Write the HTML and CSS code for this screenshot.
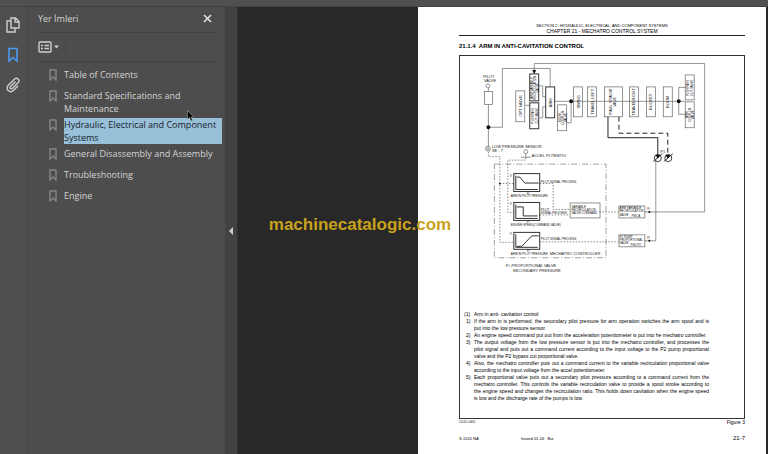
FILE: index.html
```html
<!DOCTYPE html>
<html lang="tr">
<head>
  <meta charset="UTF-8">
  <meta name="viewport" content="width=device-width, initial-scale=1.0">
  <title>Yer İmleri</title>
  <link rel="stylesheet" href="styles.css">
</head>
<body>
  <div class="toolbar"></div>
  <div class="app">
    <nav class="rail">
      <button aria-label="Sayfalar">
        <svg width="14" height="16" viewBox="0 0 14 16"><path d="M5 1h4.500L13 4.500V11H5zM9 1v4h4M5 4H1v11h8v-4" /></svg>
      </button>
      <button class="active" aria-label="Yer İmleri">
        <svg width="14" height="16" viewBox="0 0 14 16"><path d="M3 1.500h8v12.500L7 10.500 3 14z" /></svg>
      </button>
      <button aria-label="Ekler">
        <svg width="14" height="16" viewBox="0 0 14 16"><path d="M9.500 4.500L4.600 9.400c-1.300 1.600.4 3.200 1.900 1.900L12 5.800c2.600-2.900-1-6-3.700-3.500L2.500 8c-4 4.200 1.400 9 5.200 5.200l4.300-4.400" /></svg>
      </button>
    </nav>
    <aside class="panel">
      <div class="panel-header">
        <h2>Yer İmleri</h2>
        <button aria-label="Kapat">
          <svg width="9" height="9" viewBox="0 0 9 9"><path d="M1 1l7 7M8 1L1 8" /></svg>
        </button>
      </div>
      <div class="panel-tools">
        <button aria-label="Seçenekler">
          <svg width="21" height="12" viewBox="0 0 21 12">
            <rect x="1" y="1" width="12" height="10" rx="1" />
            <path d="M3 4.500h2M6.500 4.500H11M3 7.500h2M6.500 7.500H11" />
            <path class="caret" d="M16 4.500h5L18.500 7.500z" />
          </svg>
        </button>
      </div>
      <ul class="bookmarks">
        <li><svg class="mark" viewBox="0 0 8 12"><path d="M1 1h6v10L4 8l-3 3z" /></svg><a href="#">Table of Contents</a></li>
        <li><svg class="mark" viewBox="0 0 8 12"><path d="M1 1h6v10L4 8l-3 3z" /></svg><a href="#">Standard Specifications and Maintenance</a></li>
        <li><svg class="mark" viewBox="0 0 8 12"><path d="M1 1h6v10L4 8l-3 3z" /></svg><a href="#" class="selected">Hydraulic, Electrical and Component Systems</a></li>
        <li><svg class="mark" viewBox="0 0 8 12"><path d="M1 1h6v10L4 8l-3 3z" /></svg><a href="#">General Disassembly and Assembly</a></li>
        <li><svg class="mark" viewBox="0 0 8 12"><path d="M1 1h6v10L4 8l-3 3z" /></svg><a href="#">Troubleshooting</a></li>
        <li><svg class="mark" viewBox="0 0 8 12"><path d="M1 1h6v10L4 8l-3 3z" /></svg><a href="#">Engine</a></li>
      </ul>
    </aside>
    <button class="splitter" aria-label="Paneli gizle">
      <svg width="4" height="8" viewBox="0 0 4 8"><path d="M4 0v8L0 4z" /></svg>
    </button>
    <main class="viewer">
      <article class="page" lang="en">
        <header class="page-header">
          <p class="section">SECTION 2 -HYDRAULIC, ELECTRICAL, AND COMPONENT SYSTEMS</p>
          <p class="chapter">CHAPTER 21 - MECHATRO CONTROL SYSTEM</p>
        </header>
        <h1>21.1.4&nbsp; ARM IN ANTI-CAVITATION CONTROL</h1>
        <section class="figure">
          <svg class="diagram" viewBox="460 56 285 240">
            <!-- pilot line and main loop -->
            <g class="thin">
              <circle cx="488" cy="86" r="2" />
              <rect x="484.500" y="91.500" width="8" height="13" />
              <path d="M488.500 88v3M488.500 105v42M488.500 127.500h14v-59h48V87M534.500 74V63.500h171v149H645M656.500 161v80.500H645" />
              <circle cx="488" cy="149" r="2.500" /><circle cx="488" cy="149" r="1" />
              <circle cx="526" cy="152" r="2" /><path d="M526 154v4M521 157.500h10" />
              <path d="M525 105.500h5M555 101.500h131M571.500 102v21H567M686 87.500h-6.500v27h6.500M540 86h3v11h3M540 118h3v-11h3" />
            </g>
            <path class="fill" d="M532.500 70h4l-2 4zM486.500 127.500a2 2 0 1 0 4 0a2 2 0 1 0-4 0M569.500 101.500a2 2 0 1 0 4 0a2 2 0 1 0-4 0M677.500 101.500a2 2 0 1 0 4 0a2 2 0 1 0-4 0M649 212.500a1 1 0 1 0 2 0a1 1 0 1 0-2 0M649 241.500a1 1 0 1 0 2 0a1 1 0 1 0-2 0M499 184a1 1 0 1 0 2 0a1 1 0 1 0-2 0" />
            <!-- valve blocks -->
            <g class="block">
              <rect x="516" y="91" width="9" height="31" />
              <rect x="558" y="105" width="9" height="26" />
              <rect x="574" y="87" width="9" height="30" />
              <rect x="588" y="87" width="9" height="30" />
              <rect x="605" y="87" width="18" height="30" />
              <rect x="630" y="87" width="9" height="30" />
              <rect x="647" y="87" width="9" height="30" />
              <rect x="664" y="87" width="9" height="30" />
              <rect x="686" y="75" width="9" height="25" />
              <rect x="686" y="102" width="9" height="26" />
            </g>
            <g class="block strong">
              <rect x="530" y="74" width="9" height="27" />
              <rect x="530" y="103" width="9" height="26" />
              <rect x="546" y="87" width="9" height="31" />
            </g>
            <g class="label middle">
              <text transform="translate(522 106) rotate(-90)">OPT VALVE</text>
              <text transform="translate(552 103) rotate(-90)">ARM</text>
              <text transform="translate(580 102) rotate(-90)">SWING</text>
              <text transform="translate(594 102) rotate(-90)">TRAVEL LEFT</text>
              <text transform="translate(636 102) rotate(-90)">TRAVELRIGHT</text>
              <text transform="translate(653 102) rotate(-90)">BUCKET</text>
              <text transform="translate(670 102) rotate(-90)">BOOM</text>
            </g>
            <g class="small middle">
              <text transform="translate(533 88) rotate(-90)">ARM VARIABLE</text>
              <text transform="translate(536 88) rotate(-90)">RECIRCULATION</text>
              <text transform="translate(539 88) rotate(-90)">VALVE</text>
              <text transform="translate(534 116) rotate(-90)">P1 BYPASS</text>
              <text transform="translate(538 116) rotate(-90)">CUT VALVE</text>
              <text transform="translate(561 118) rotate(-90)">BOOM</text>
              <text transform="translate(564 118) rotate(-90)">CONFLUX</text>
              <text transform="translate(567 118) rotate(-90)">VALVE</text>
              <text transform="translate(613 102) rotate(-90)">TRAVEL STRAIGHT</text>
              <text transform="translate(617 102) rotate(-90)">VALVE</text>
              <text transform="translate(690 88) rotate(-90)">P2 BYPASS</text>
              <text transform="translate(694 88) rotate(-90)">CUT VALVE</text>
              <text transform="translate(689 115) rotate(-90)">ARM</text>
              <text transform="translate(692 115) rotate(-90)">CONFLUX</text>
              <text transform="translate(695 115) rotate(-90)">VALVE</text>
            </g>
            <!-- pumps -->
            <path class="line" d="M608.500 117v21h50v18" />
            <path class="line dashed" d="M619.500 117v16.500h49V156" />
            <g class="pump">
              <circle cx="658.500" cy="158.500" r="3.500" /><path d="M654 162l9-8" />
              <circle cx="669" cy="158.500" r="3.500" /><path d="M664.500 162l9-8" />
            </g>
            <path class="fill" d="M656 155h5l-2.500 4zM666 155h5l-2.500 4z" />
            <!-- mechatro controller -->
            <rect class="controller" x="494.500" y="164.500" width="112" height="94" />
            <path class="dotted" d="M488.500 152v5H500v86h14M500 184h14M526 158v2.500h-18V213h6M540 184h13.500v26H570M540 215.500h30M600 212.500h19M540 242.500h79" />
            <g class="block strong">
              <rect x="514" y="174" width="26" height="18" />
              <rect x="514" y="203" width="26" height="18" />
              <rect x="514" y="233" width="26" height="17" />
            </g>
            <g class="block">
              <rect x="570.500" y="203.500" width="30" height="15" />
              <rect x="619.500" y="206.500" width="26" height="12" />
              <rect x="619.500" y="235.500" width="26" height="12" />
            </g>
            <path class="curve" d="M516 176v14h22M517 177.500h3l5 6h14M516 205v14h22M517 207.500h6.500v9H538M516 235v13h22M517 247h5l10-10.500h7" />
            <g class="label">
              <text x="483" y="78">PILOT</text>
              <text x="484" y="82">VALVE</text>
              <text x="492" y="148">LOW PRESSURE SENSOR</text>
              <text x="492" y="152">SE - 7</text>
              <text x="532" y="157">ACCEL POTENTIO</text>
              <text x="550" y="256">MECHATRO CONTROLLER</text>
              <text x="506" y="268">Pi ;PROPORTIONAL VALVE</text>
              <text x="513" y="273">SECONDARY PRESSURE</text>
              <text x="661" y="153">P1</text>
            </g>
            <g class="small">
              <text x="541" y="183">PILOT SIGNAL PROCESS</text>
              <text x="541" y="212">PILOT</text>
              <text x="541" y="215">SIGNAL PROCESS</text>
              <text x="541" y="241">PILOT SIGNAL PROCESS</text>
              <text x="511" y="198">ARM IN PILOT PRESSURE</text>
              <text x="511" y="227">ENGINE SPEED(COMMAND VALVE)</text>
              <text x="511" y="256">ARM IN PILOT PRESSURE</text>
              <text x="527" y="195">Pi</text>
              <text x="527" y="224">Pi</text>
              <text x="527" y="253">Pi</text>
              <text x="510" y="177">V</text>
              <text x="510" y="206">V</text>
              <text x="510" y="236">V</text>
              <text x="572" y="209">VARIABLE</text>
              <text x="572" y="212">RECIRCULATION</text>
              <text x="572" y="215">VALVE COMMAND</text>
              <text x="620" y="210">ARM VARIABLE</text>
              <text x="620" y="213">RECIRCULATION</text>
              <text x="620" y="217">VALVE</text>
              <text x="632" y="218">PSV-A</text>
              <text x="620" y="239">P2 PUMP</text>
              <text x="620" y="242">PROPORTIONAL</text>
              <text x="620" y="245">VALVE</text>
              <text x="631" y="247">PSV-P2</text>
              <text x="648" y="211">Pi</text>
              <text x="648" y="240">Pi</text>
            </g>
          </svg>
          <div class="notes">
            <p class="lead"><span>(1)</span>Arm in anti- cavitation control</p>
            <ol>
              <li>If the arm in is performed, the secondary pilot pressure for arm operation switches the arm spool and is put into the low pressure sensor.</li>
              <li>An engine speed command put out from the acceleration potentiometer is put into he mechatro controller.</li>
              <li>The output voltage from the low pressure sensor is put into the mechatro controller, and processes the pilot signal and puts out a command current according to the input voltage to the P2 pump proportional valve and the P2 bypass cut proportional valve.</li>
              <li>Also, the mechatro controller puts out a command current to the variable recirculation proportional valve according to the input voltage from the accel potentiometer.</li>
              <li>Each proportional valve puts out a secondary pilot pressure according to a command current from the mechatro controller. This controls the variable recirculation valve to provide a spool stroke according to the engine speed and changes the recirculation ratio. This holds down cavitation when the engine speed is low and the discharge rate of the pumps is low.</li>
            </ol>
          </div>
        </section>
        <div class="caption"><span class="code">C0-D1-0401</span><span>Figure 3</span></div>
        <footer class="page-footer">
          <span>S-1520 NA</span>
          <span>Issued 01-06 &nbsp; Bur</span>
          <span class="number">21-7</span>
        </footer>
      </article>
    </main>
  </div>
  <div class="watermark">machinecatalogic.com</div>
  <svg class="cursor" width="8" height="12" viewBox="0 0 8 12"><path d="M.5.5v9l2-2 1.500 3.500 1.500-.7L4 7h3z" /></svg>
</body>
</html>
```
FILE: styles.css
```css
* {
  box-sizing: border-box;
}
body {
  margin: 0;
  height: 100vh;
  display: flex;
  flex-direction: column;
  overflow: hidden;
  position: relative;
  background: #282828;
  color: #d4d4d4;
  font-family: "Open Sans", "Noto Sans", sans-serif;
}
p, h1, h2, ul, ol {
  margin: 0;
  padding: 0;
}
button {
  padding: 0;
  border: none;
  background: none;
  display: flex;
  align-items: center;
  justify-content: center;
  cursor: pointer;
}
svg {
  fill: none;
  flex: none;
}
.toolbar {
  height: 7px;
  flex: none;
  background: #505050;
  border-bottom: 1px solid #434343;
}
.app {
  flex: 1;
  min-height: 0;
  display: flex;
}

/* left side */
.rail {
  width: 28px;
  display: flex;
  flex-direction: column;
  align-items: center;
  gap: 14px;
  padding: 10px 2px 0 0;
  background: #4f4f4f;
  border-right: 1px solid #464646;
}
.rail svg {
  stroke: #cfcfcf;
  stroke-width: 1.4;
}
.rail .active svg {
  stroke: #4a9cf0;
  stroke-width: 1.6;
}
.panel {
  width: 197px;
  background: #4d4d4d;
  padding: 0 3px 0 10px;
}
.panel-header {
  height: 26px;
  margin-right: 5px;
  padding: 0 5px 2px 0;
  display: flex;
  align-items: center;
  justify-content: space-between;
  border-bottom: 1px solid #434343;
}
.panel-header h2 {
  font-size: 9px;
  font-weight: 400;
}
.panel-header svg {
  stroke: #e0e0e0;
  stroke-width: 1.6;
}
.panel-tools {
  height: 29px;
  margin-right: 5px;
  display: flex;
  align-items: center;
  border-bottom: 1px solid #434343;
}
.panel-tools button {
  height: 18px;
  padding-right: 6px;
  border-right: 1px solid #464646;
}
.panel-tools svg {
  stroke: #cfcfcf;
  stroke-width: 1.4;
}
.panel-tools .caret {
  fill: #cfcfcf;
  stroke: none;
}
.bookmarks {
  list-style: none;
  padding: 6px 0 0 11px;
  display: flex;
  flex-direction: column;
  gap: 3px;
}
.bookmarks li {
  display: flex;
  align-items: flex-start;
  gap: 7px;
  min-height: 18px;
}
.bookmarks .mark {
  width: 8px;
  height: 12px;
  margin-top: 1px;
  stroke: #858585;
  stroke-width: 1.4;
}
.bookmarks a {
  flex: 1;
  font-size: 9px;
  line-height: 13px;
  color: #d4d4d4;
  text-decoration: none;
}
.bookmarks .selected {
  background: #98c0d9;
  color: #17222b;
}
.splitter {
  width: 13px;
  background: #424242;
  border-right: 1px solid #303030;
}
.splitter path {
  fill: #d0d0d0;
}

/* document */
.viewer {
  flex: 1;
  min-width: 0;
  padding: 0 2px 0 180px;
}
.page {
  min-height: 100%;
  padding: 16px 21px 0 41px;
  background: #fff;
  color: #000;
  font-family: "Liberation Sans", Arial, sans-serif;
  font-size: 5px;
  line-height: 7px;
}
.page-header {
  padding-bottom: 1px;
  text-align: center;
  border-bottom: 1px solid #222;
}
.page-header p {
  line-height: 6px;
}
.page-header .section {
  font-size: 4px;
  line-height: 5px;
}
h1 {
  padding: 7px 0 5px;
  font-size: 6px;
  line-height: 7px;
}
.figure {
  border: 1px solid #333;
  padding-bottom: 16px;
}
.diagram {
  display: block;
  width: 100%;
  margin-bottom: 16px;
  font-family: "Liberation Sans", Arial, sans-serif;
}
.notes {
  padding: 0 35px 0 4px;
}
.notes .lead span {
  display: inline-block;
  width: 10px;
}
.notes ol {
  list-style: none;
  counter-reset: note;
}
.notes li {
  display: flex;
  counter-increment: note;
  text-align: justify;
}
.notes li::before {
  content: counter(note) ")";
  flex: none;
  width: 8px;
  padding-left: 2px;
}
.caption {
  display: flex;
  justify-content: space-between;
}
.caption .code {
  font-size: 3px;
}
.page-footer {
  display: grid;
  grid-template-columns: 62px 1fr auto;
  padding-top: 9px;
  font-size: 4px;
}
.page-footer .number {
  font-size: 6px;
}

/* hydraulic diagram */
.thin, .block, .curve {
  stroke: #666;
  stroke-width: 0.7;
}
.strong, .curve {
  stroke: #333;
  stroke-width: 1;
}
.fill {
  fill: #111;
}
.line {
  stroke: #222;
  stroke-width: 1;
}
.dashed {
  stroke-dasharray: 5 3;
}
.dotted {
  stroke: #555;
  stroke-width: 0.7;
  stroke-dasharray: 1.500 1.500;
}
.controller {
  stroke: #777;
  stroke-width: 0.7;
  stroke-dasharray: 6 2 1 2;
}
.pump {
  stroke: #222;
  stroke-width: 0.9;
}
.label {
  fill: #222;
  font-size: 4px;
}
.small {
  fill: #111;
  font-size: 3px;
}
.middle {
  text-anchor: middle;
}

.watermark {
  position: absolute;
  left: 35%;
  top: 215px;
  font: bold 17px/20px "Liberation Sans", Arial, sans-serif;
  color: #c9a21c;
}
.cursor {
  position: absolute;
  left: 187px;
  top: 110px;
}
.cursor path {
  fill: #000;
  stroke: #bbb;
  stroke-width: 0.5;
}
```
